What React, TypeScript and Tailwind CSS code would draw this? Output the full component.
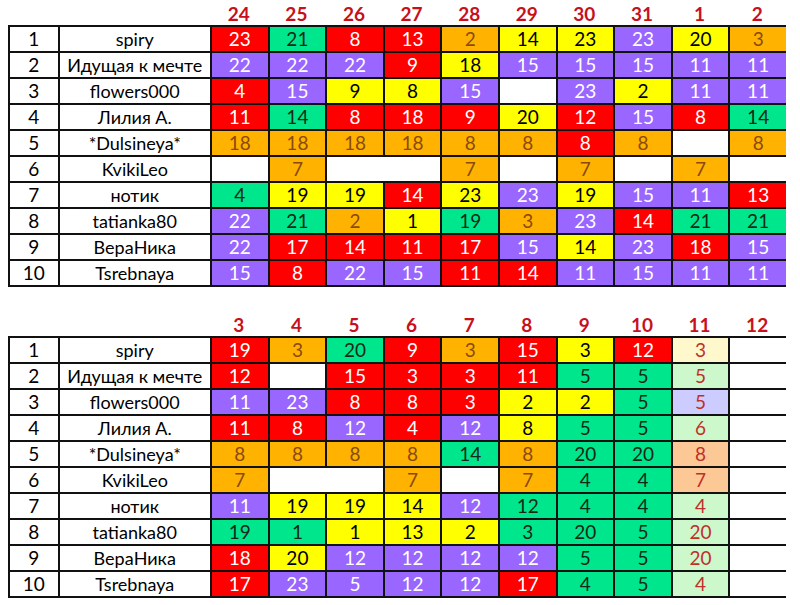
type Cell = { v?: string; c: string; span?: number };

const fills: Record<string, string> = {
  R: "bg-[#ff0000] text-white",
  G: "bg-[#00e68c] text-[#0f2a16]",
  P: "bg-[#9966ff] text-white",
  Y: "bg-[#ffff00] text-black",
  O: "bg-[#ffb300] text-[#8a4a0c]",
  W: "bg-white",
  LY: "bg-[#fff8cc] text-[#c0302a]",
  LG: "bg-[#ccf8cc] text-[#c0302a]",
  LP: "bg-[#ccccff] text-[#c0302a]",
  PE: "bg-[#fbc896] text-[#c0302a]",
};

// "23R" -> value 23, colour R; "W" -> empty white; "W2" -> empty white over two columns
const parse = (row: string): Cell[] =>
  row.split(" ").map((t) => {
    if (t === "W") return { c: "W" };
    if (t === "W2") return { c: "W", span: 2 };
    const m = t.match(/^(\d+)([A-Z]+)$/)!;
    return { v: m[1], c: m[2] };
  });

const top = {
  head: ["24", "25", "26", "27", "28", "29", "30", "31", "1", "2"],
  rows: [
    ["spiry", "23R 21G 8R 13R 2O 14Y 23Y 23P 20Y 3O"],
    ["Идущая к мечте", "22P 22P 22P 9R 18Y 15P 15P 15P 11P 11P"],
    ["flowers000", "4R 15P 9Y 8Y 15P W 23P 2Y 11P 11P"],
    ["Лилия А.", "11R 14G 8R 18R 9R 20Y 12R 15P 8R 14G"],
    ["*Dulsineya*", "18O 18O 18O 18O 8O 8O 8R 8O W 8O"],
    ["KvikiLeo", "W 7O W2 7O W 7O W 7O W"],
    ["нотик", "4G 19Y 19Y 14R 23Y 23P 19Y 15P 11P 13R"],
    ["tatianka80", "22P 21G 2O 1Y 19G 3O 23P 14R 21G 21G"],
    ["ВераНика", "22P 17R 14R 11R 17R 15P 14Y 23P 18R 15P"],
    ["Tsrebnaya", "15P 8R 22P 15P 11R 14R 11P 15P 11P 11P"],
  ],
};

const bottom = {
  head: ["3", "4", "5", "6", "7", "8", "9", "10", "11", "12"],
  rows: [
    ["spiry", "19R 3O 20G 9R 3O 15R 3Y 12R 3LY W"],
    ["Идущая к мечте", "12R W 15R 3R 3R 11R 5G 5G 5LG W"],
    ["flowers000", "11P 23P 8R 8R 3R 2Y 2Y 5G 5LP W"],
    ["Лилия А.", "11R 8R 12P 4R 12P 8Y 5G 5G 6LG W"],
    ["*Dulsineya*", "8O 8O 8O 8O 14G 8O 20G 20G 8PE W"],
    ["KvikiLeo", "7O W2 7O W 7O 4G 4G 7PE W"],
    ["нотик", "11P 19Y 19Y 14Y 12P 12G 4G 4G 4LG W"],
    ["tatianka80", "19G 1G 1Y 13Y 2Y 3G 20G 5G 20LG W"],
    ["ВераНика", "18R 20Y 12P 12P 12P 12P 5G 5G 20LG W"],
    ["Tsrebnaya", "17R 23P 5P 12P 12P 17R 4G 5G 4LG W"],
  ],
};

function ScoreTable({ head, rows }: { head: string[]; rows: string[][] }) {
  return (
    <div className="w-[778px]">
      <div className="grid grid-cols-[202px_repeat(10,57.6px)] h-[25px] items-center">
        <div />
        {head.map((h, i) => (
          <div key={i} className="text-center font-bold text-[19px] text-[#c8101a] leading-none pt-[1px]">
            {h}
          </div>
        ))}
      </div>
      <div className="grid grid-cols-[47.5px_150.5px_repeat(10,55.6px)] auto-rows-[24px] gap-[2px] p-[2px] bg-[#111]">
        {rows.map(([name, data], r) => (
          <div key={r} className="contents">
            <div className="bg-white flex items-center justify-center text-[19px] text-black">{r + 1}</div>
            <div className="bg-white flex items-center justify-center text-[18px] text-black">{name}</div>
            {parse(data).map((cell, i) => (
              <div
                key={i}
                className={`flex items-center justify-center text-[19px] ${fills[cell.c]} ${cell.span === 2 ? "col-span-2" : ""}`}
              >
                {cell.v}
              </div>
            ))}
          </div>
        ))}
      </div>
    </div>
  );
}

export default function App() {
  return (
    <div className="w-[800px] h-[605px] bg-white pl-[8px] font-['Lato',sans-serif] overflow-hidden">
      <ScoreTable head={top.head} rows={top.rows} />
      <div className="h-[24px]" />
      <ScoreTable head={bottom.head} rows={bottom.rows} />
    </div>
  );
}
